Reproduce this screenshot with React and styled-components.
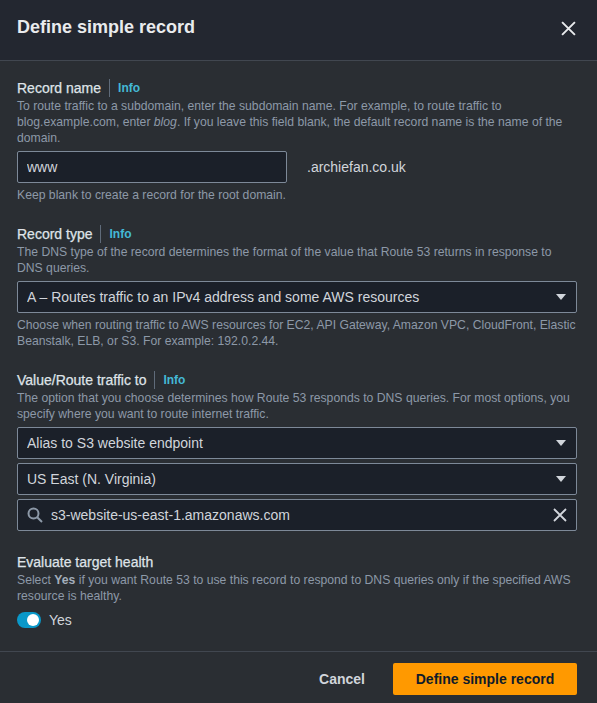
import * as React from "react"
import styled, {createGlobalStyle} from 'styled-components';

const GlobalStyle = createGlobalStyle`
  html, body {
    margin: 0;
    padding: 0;
    background: #2a2e33;
  }
  * {
    box-sizing: border-box;
  }
`;

const Modal = styled.div`
  width: 597px;
  height: 703px;
  display: flex;
  flex-direction: column;
  background: #2a2e33;
  font-family: "Liberation Sans", Arial, sans-serif;
  color: #d1d5db;
  overflow: hidden;
`;

const Header = styled.div`
  height: 61px;
  display: flex;
  align-items: center;
  justify-content: space-between;
  padding: 0 21px 0 17px;
  background: #232730;
  border-bottom: 1px solid #414750;
`;

const Title = styled.h2`
  margin: 0 0 6px;
  font-size: 18px;
  font-weight: 700;
  color: #e9ebed;
`;

const CloseButton = styled.button`
  background: none;
  border: none;
  padding: 0;
  display: flex;
  color: #d1d5db;
  cursor: pointer;
  margin-bottom: 4px;
`;

const Body = styled.div`
  flex: 1;
  display: flex;
  flex-direction: column;
  gap: 20px;
  padding: 16px 20px 0 17px;
`;

const Field = styled.div`
  display: flex;
  flex-direction: column;
`;

const LabelRow = styled.div`
  display: flex;
  align-items: center;
  height: 21px;
`;

const Label = styled.span`
  font-size: 14px;
  font-weight: 400;
  color: #dfe3e8;
  -webkit-text-stroke: 0.25px #dfe3e8;
`;

const Info = styled.a`
  font-size: 12px;
  font-weight: 700;
  color: #44b9d6;
  margin-left: 8px;
  padding-left: 8px;
  border-left: 1px solid #5f6b7a;
  line-height: 18px;
`;

const Description = styled.p`
  margin: 0;
  font-size: 12.2px;
  line-height: 16px;
  color: #8d99a8;

  b {
    color: #a4aebb;
  }
`;

const Hint = styled(Description)`
  margin-top: ${p => p.$gap || 4}px;
`;

const Controls = styled.div`
  display: flex;
  flex-direction: column;
  gap: 4px;
  margin-top: ${p => p.$top || 5}px;
`;

const InputRow = styled.div`
  display: flex;
  align-items: center;
  gap: 20px;
`;

const Box = styled.div`
  height: 32px;
  width: ${p => p.$width || "100%"};
  display: flex;
  align-items: center;
  gap: 8px;
  padding: 0 9px 0 9px;
  background: #1b2029;
  border: 1px solid #7d8998;
  border-radius: 2px;
  font-size: 14px;
  color: #d1d5db;
`;

const BoxText = styled.span`
  flex: 1;
  white-space: nowrap;
  overflow: hidden;
`;

const Suffix = styled.span`
  font-size: 14px;
  color: #d1d5db;
`;

const ToggleRow = styled.div`
  display: flex;
  align-items: center;
  gap: 8px;
  margin-top: 8px;
  font-size: 14px;
  color: #d1d5db;
`;

const Track = styled.span`
  width: 24px;
  height: 16px;
  border-radius: 8px;
  background: #0a98c9;
  display: flex;
  align-items: center;
  justify-content: flex-end;
  padding-right: 2px;
`;

const Knob = styled.span`
  width: 12px;
  height: 12px;
  border-radius: 50%;
  background: #ffffff;
`;

const Footer = styled.div`
  height: 52px;
  border-top: 1px solid #414750;
  display: flex;
  align-items: flex-end;
  justify-content: flex-end;
  gap: 28px;
  padding: 0 20px 8px 0;
`;

const TextButton = styled.button`
  background: none;
  border: none;
  font-family: inherit;
  font-size: 14px;
  font-weight: 700;
  color: #d1d5db;
  height: 32px;
  padding: 0;
  cursor: pointer;
`;

const PrimaryButton = styled.button`
  width: 184px;
  height: 32px;
  border: none;
  border-radius: 2px;
  background: #ff9900;
  color: #0f1b2a;
  font-family: inherit;
  font-size: 14px;
  font-weight: 700;
  cursor: pointer;
`;

const Caret = () => (
  <svg width="12" height="8" viewBox="0 0 12 8">
    <path d="M1 1h10L6 7z" fill="#d1d5db"/>
  </svg>
)

const SearchIcon = () => (
  <svg width="16" height="16" viewBox="0 0 16 16" fill="none" stroke="#8d99a8" strokeWidth="2">
    <circle cx="6.5" cy="6.5" r="5"/>
    <path d="M10.2 10.2L15 15"/>
  </svg>
)

const ClearIcon = ({size = 14, color = "#d1d5db"}) => (
  <svg width={size} height={size} viewBox="0 0 14 14" fill="none" stroke={color} strokeWidth="1.8">
    <path d="M1 1l12 12M13 1L1 13"/>
  </svg>
)

const FieldLabel = ({children, info}) => (
  <LabelRow>
    <Label>{children}</Label>
    {info && <Info>Info</Info>}
  </LabelRow>
)

const Select = ({children}) => (
  <Box>
    <BoxText>{children}</BoxText>
    <Caret/>
  </Box>
)

const App = () => <>
  <GlobalStyle/>
  <Modal>
    <Header>
      <Title>Define simple record</Title>
      <CloseButton><ClearIcon size={15} color="#e9ebed"/></CloseButton>
    </Header>
    <Body>
      <Field>
        <FieldLabel info>Record name</FieldLabel>
        <Description>
          To route traffic to a subdomain, enter the subdomain name. For example, to route traffic to
          blog.example.com, enter <i>blog</i>. If you leave this field blank, the default record name is the name of the
          domain.
        </Description>
        <Controls $top={5}>
          <InputRow>
            <Box $width="270px"><BoxText>www</BoxText></Box>
            <Suffix>.archiefan.co.uk</Suffix>
          </InputRow>
        </Controls>
        <Hint>Keep blank to create a record for the root domain.</Hint>
      </Field>

      <Field>
        <FieldLabel info>Record type</FieldLabel>
        <Description>
          The DNS type of the record determines the format of the value that Route 53 returns in response to
          DNS queries.
        </Description>
        <Controls>
          <Select>A – Routes traffic to an IPv4 address and some AWS resources</Select>
        </Controls>
        <Hint>
          Choose when routing traffic to AWS resources for EC2, API Gateway, Amazon VPC, CloudFront, Elastic
          Beanstalk, ELB, or S3. For example: 192.0.2.44.
        </Hint>
      </Field>

      <Field>
        <FieldLabel info>Value/Route traffic to</FieldLabel>
        <Description>
          The option that you choose determines how Route 53 responds to DNS queries. For most options, you
          specify where you want to route internet traffic.
        </Description>
        <Controls>
          <Select>Alias to S3 website endpoint</Select>
          <Select>US East (N. Virginia)</Select>
          <Box>
            <SearchIcon/>
            <BoxText>s3-website-us-east-1.amazonaws.com</BoxText>
            <ClearIcon/>
          </Box>
        </Controls>
      </Field>

      <Field>
        <FieldLabel>Evaluate target health</FieldLabel>
        <Description>
          Select <b>Yes</b> if you want Route 53 to use this record to respond to DNS queries only if the specified AWS
          resource is healthy.
        </Description>
        <ToggleRow>
          <Track><Knob/></Track>
          Yes
        </ToggleRow>
      </Field>
    </Body>
    <Footer>
      <TextButton>Cancel</TextButton>
      <PrimaryButton>Define simple record</PrimaryButton>
    </Footer>
  </Modal>
</>

export default App;
